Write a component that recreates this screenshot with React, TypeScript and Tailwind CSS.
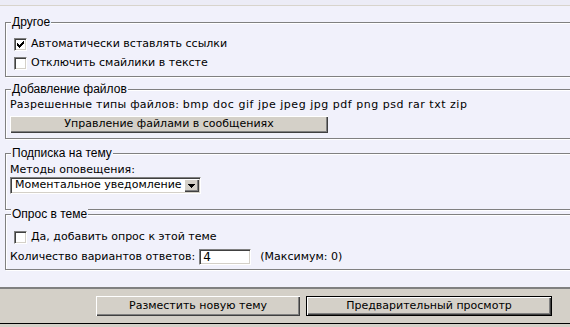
import React from "react";

const BEVEL =
  "bg-[#d4d0c8] shadow-[inset_1px_1px_0_#fff,inset_-1px_-1px_0_#404040,inset_-2px_-2px_0_#808080]";
const SUNKEN =
  "border border-t-[#808080] border-l-[#808080] border-r-white border-b-white bg-white shadow-[inset_1px_1px_0_#404040,inset_-1px_-1px_0_#d4d0c8]";

// classic 7x7 tick, drawn pixel by pixel
const TICK: [number, number, number][] = [
  [6, 0, 1],
  [5, 1, 2],
  [0, 2, 1],
  [4, 2, 3],
  [0, 3, 2],
  [3, 3, 3],
  [0, 4, 5],
  [1, 5, 3],
  [2, 6, 1],
];

function Check({ checked }: { checked?: boolean }) {
  return (
    <span className={`ml-[4px] mr-[4px] flex h-[13px] w-[13px] shrink-0 items-center justify-center ${SUNKEN}`}>
      {checked && (
        <svg width="7" height="7" viewBox="0 0 7 7" shapeRendering="crispEdges">
          {TICK.map(([x, y, w], i) => (
            <rect key={i} x={x} y={y} width={w} height={1} fill="#000" />
          ))}
        </svg>
      )}
    </span>
  );
}

function Group({
  title,
  className,
  children,
}: {
  title: string;
  className: string;
  children: React.ReactNode;
}) {
  return (
    <fieldset
      className={`ml-[5px] mr-[-30px] min-w-0 border border-[#808080] pl-[4px] shadow-[1px_1px_0_#fff,inset_1px_1px_0_#fff] ${className}`}
    >
      <legend className="ml-[1px] bg-[#f1f1fb] px-[1px] font-['Liberation_Sans',Arial,sans-serif] text-[12px] leading-[11px]">
        {title}
      </legend>
      {children}
    </fieldset>
  );
}

export default function App() {
  return (
    <div className="flex h-[327px] w-[570px] flex-col overflow-hidden bg-[#ececf6] font-['DejaVu_Sans',Verdana,sans-serif] text-[11px] text-black">
      <div className="h-[5px] shrink-0" />
      <div className="h-px shrink-0 bg-[#d8d4cc]" />

      {/* form body */}
      <div className="flex h-[281px] shrink-0 flex-col overflow-hidden bg-[#f1f1fb]">
        <Group title="Другое" className="mt-[11px] pt-[7px] pb-[3px]">
          <label className="flex h-[19px] items-center">
            <Check checked />
            <span>Автоматически вставлять ссылки</span>
          </label>
          <label className="flex h-[19px] items-center">
            <Check />
            <span>Отключить смайлики в тексте</span>
          </label>
        </Group>

        <Group title="Добавление файлов" className="mt-[7px] pt-[3px] pb-[5px]">
          <div className="flex h-[15px] items-center whitespace-pre">
            <span className="tracking-[0.24px]">Разрешенные типы файлов: </span>
            <span className="tracking-[0.52px]">bmp doc gif jpe jpeg jpg pdf png psd rar txt zip</span>
          </div>
          <div className={`mt-[3px] flex h-[17px] w-[318px] items-center justify-center ${BEVEL}`}>
            Управление файлами в сообщениях
          </div>
        </Group>

        <Group title="Подписка на тему" className="mt-[9px] pt-[4px] pb-[15px]">
          <div className="flex h-[14px] items-center">Методы оповещения:</div>
          <div className={`flex h-[17px] w-[191px] items-center ${SUNKEN}`}>
            <span className="min-w-0 flex-1 overflow-hidden whitespace-nowrap pl-[4px]">Моментальное уведомление</span>
            <span className={`mr-px flex h-[13px] w-[15px] shrink-0 items-center justify-center ${BEVEL}`}>
              <svg width="7" height="4" viewBox="0 0 7 4" shapeRendering="crispEdges">
                <path d="M0 0h7v1H0zM1 1h5v1H1zM2 2h3v1H2zM3 3h1v1H3z" fill="#000" />
              </svg>
            </span>
          </div>
        </Group>

        <Group title="Опрос в теме" className="mt-[-1px] pt-[8px] pb-[3px]">
          <label className="flex h-[19px] items-center">
            <Check />
            <span>Да, добавить опрос к этой теме</span>
          </label>
          <div className="mt-px flex h-[18px] items-center">
            <span>Количество вариантов ответов:</span>
            <span className={`ml-[4px] flex h-[16px] w-[52px] items-center pl-[3px] text-[12px] ${SUNKEN}`}>4</span>
            <span className="ml-[9px]">(Максимум: 0)</span>
          </div>
        </Group>
      </div>

      <div className="h-[2px] shrink-0 bg-[#808080]" />

      {/* footer with submit buttons */}
      <div className="flex h-[34px] shrink-0 justify-end gap-[6px] bg-[#d4d0c8] pt-[7px] pr-[18px]">
        <div className={`flex h-[20px] w-[204px] items-center justify-center ${BEVEL}`}>
          Разместить новую тему
        </div>
        <div className="h-[20px] w-[246px] border border-black">
          <div className={`flex h-full w-full items-center justify-center ${BEVEL}`}>
            Предварительный просмотр
          </div>
        </div>
      </div>
      <div className="h-px shrink-0 bg-black" />
      <div className="flex-1 bg-[#d4d0c8]" />
    </div>
  );
}
